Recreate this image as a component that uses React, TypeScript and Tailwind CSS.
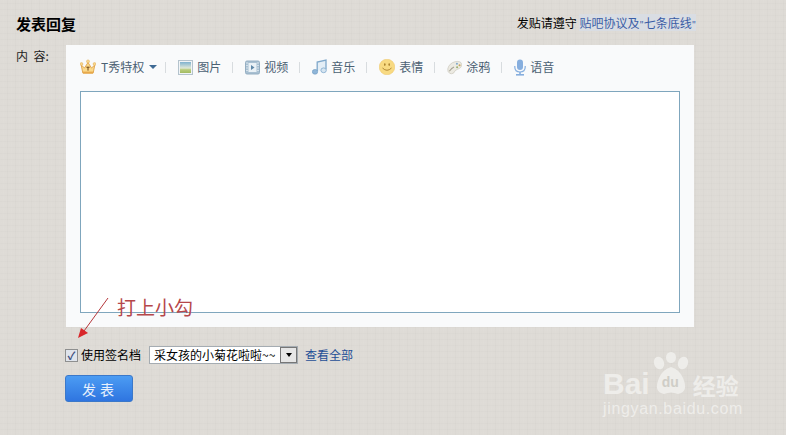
import { ReactNode } from 'react';

const cjk = "font-['Noto_Sans_CJK_SC','Liberation_Sans',sans-serif]";

function Crown() {
  return (
    <svg width="16" height="16" viewBox="0 0 16 16">
      <path d="M1.2 6 L4.5 9 L8 3.5 L11.5 9 L14.8 6 L13.2 14 H2.8 Z" fill="#fbd98a" stroke="#dfa24a" strokeWidth="0.9" />
      <circle cx="1.5" cy="5" r="1.4" fill="#f9d88c" stroke="#e0a850" strokeWidth="0.5" />
      <circle cx="14.5" cy="5" r="1.4" fill="#f9d88c" stroke="#e0a850" strokeWidth="0.5" />
      <circle cx="8" cy="2.4" r="1.5" fill="#f9d88c" stroke="#e0a850" strokeWidth="0.5" />
      <rect x="3" y="12.6" width="10" height="2" fill="#e8a94a" />
      <path d="M6.4 8.2 H9.6 M8 8.2 V11.6" stroke="#6e4210" strokeWidth="1" />
    </svg>
  );
}

function Picture() {
  return (
    <svg width="15" height="15" viewBox="0 0 15 15">
      <defs>
        <linearGradient id="sky" x1="0" y1="0" x2="0" y2="1">
          <stop offset="0" stopColor="#7fb2cf" />
          <stop offset="0.55" stopColor="#dfe8d8" />
          <stop offset="0.7" stopColor="#b9cc7c" />
          <stop offset="1" stopColor="#a2bb62" />
        </linearGradient>
      </defs>
      <rect x="0.5" y="0.5" width="14" height="14" fill="#f1f4f6" stroke="#b4c3cd" />
      <rect x="2" y="2" width="11" height="11" fill="url(#sky)" />
    </svg>
  );
}

function Film() {
  return (
    <svg width="15" height="15" viewBox="0 0 15 15">
      <rect x="0.5" y="1" width="14" height="13" rx="1.5" fill="#a9c0d2" stroke="#94aec2" />
      <path d="M1 3 H3 M1 5.5 H3 M1 8 H3 M1 10.5 H3 M12 3 H14 M12 5.5 H14 M12 8 H14 M12 10.5 H14" stroke="#dfe8ef" strokeWidth="0.8" />
      <rect x="3.5" y="3" width="8" height="9" fill="#eaf1f6" />
      <path d="M6 5 L9.5 7.5 L6 10 Z" fill="#5f88a8" />
    </svg>
  );
}

function Music() {
  return (
    <svg width="15" height="16" viewBox="0 0 15 16">
      <path d="M5.2 12 V3 L14 1 V10.5" fill="#e4eef6" stroke="#7fa8cb" strokeWidth="1.3" />
      <ellipse cx="3" cy="12.8" rx="2.7" ry="2.4" fill="#8fb5d8" stroke="#6f9cc2" strokeWidth="0.6" />
      <ellipse cx="11.6" cy="11.3" rx="2.7" ry="2.4" fill="#d6e5f1" stroke="#7fa8cb" strokeWidth="0.8" />
    </svg>
  );
}

function Smile() {
  return (
    <svg width="16" height="16" viewBox="0 0 16 16">
      <circle cx="8" cy="8" r="7.8" fill="#f8da82" stroke="#ecc56a" strokeWidth="0.5" />
      <ellipse cx="5.8" cy="5.6" rx="0.8" ry="1.3" fill="#a9802c" />
      <ellipse cx="10.2" cy="5.6" rx="0.8" ry="1.3" fill="#a9802c" />
      <path d="M3.5 9 Q8 13.5 12.5 9" fill="none" stroke="#a9802c" strokeWidth="0.9" />
    </svg>
  );
}

function Palette() {
  return (
    <svg width="15" height="15" viewBox="0 0 16 15">
      <path d="M0.8 9 Q2 3 9 1.2 Q15 0.2 15.6 4 Q16 8 11 9.5 Q8 10.5 7.5 13 Q5 15 3 13.8 Q0.3 12 0.8 9 Z" fill="#eceae2" stroke="#c2bfb2" strokeWidth="0.6" />
      <circle cx="10.6" cy="3.4" r="1.1" fill="#7fa8cb" />
      <circle cx="13.4" cy="5" r="1.1" fill="#c7a65a" />
      <circle cx="10.8" cy="7.3" r="1.1" fill="#9ab070" />
      <path d="M2.5 11.5 Q5 8 7.5 7" stroke="#a5a294" strokeWidth="1.1" fill="none" />
    </svg>
  );
}

function Mic() {
  return (
    <svg width="12" height="17" viewBox="0 0 12 17">
      <rect x="3" y="0.5" width="6" height="10.5" rx="3" fill="#86aede" />
      <path d="M0.8 7 V8 Q0.8 13 6 13 Q11.2 13 11.2 8 V7" fill="none" stroke="#86aede" strokeWidth="1.2" />
      <rect x="5.2" y="13" width="1.6" height="2" fill="#86aede" />
      <rect x="2" y="15" width="8" height="1.6" fill="#86aede" />
    </svg>
  );
}

function Tool({ icon, label }: { icon: ReactNode; label: string }) {
  return (
    <div className="flex items-center gap-1">
      {icon}
      <span className="text-[12px] leading-none text-[#4b6173]">{label}</span>
    </div>
  );
}

const Sep = () => <span className="w-px h-[11px] bg-[#d8dcdf] ml-[11px] mr-3" />;

export default function App() {
  return (
    <div className={`${cjk} relative w-[786px] h-[435px] overflow-hidden bg-[#dedbd6] bg-[repeating-linear-gradient(90deg,#0000_0_3px,#ffffff06_3px_4px,#0000_4px_7px,#00000004_7px_8px),repeating-linear-gradient(0deg,#0000_0_2px,#ffffff05_2px_3px,#0000_3px_5px,#00000003_5px_6px)] pl-4 pt-[14px]`}>
      <div className="flex justify-between items-center w-[680px] h-[18px]">
        <h2 className="text-[15px] leading-none font-bold text-black">发表回复</h2>
        <p className="text-[12px] leading-none text-black">
          发贴请遵守 <a className="text-[#3b5ea6] bg-[#d9dde3]">贴吧协议及<span className="text-[9px]">"</span>七条底线<span className="text-[9px]">"</span></a>
        </p>
      </div>

      <div className="flex mt-[13px]">
        <span className="w-[50px] pt-[2px] text-[12px] leading-[18px] text-[#222] whitespace-pre">内  容:</span>
        <div className="w-[628px] h-[282px] bg-[#f9fafb] px-[14px] pt-3 flex flex-col">
          <div className="flex items-center h-[20px]">
            <div className="flex items-center gap-[5px]">
              <Crown />
              <span className="text-[12px] leading-none text-[#4b6173]">T秀特权</span>
              <span className="w-0 h-0 border-x-4 border-x-transparent border-t-4 border-t-[#3f6a94]" />
            </div>
            <span className="w-px h-[11px] bg-[#d8dcdf] ml-2 mr-3" />
            <Tool icon={<Picture />} label="图片" />
            <Sep />
            <Tool icon={<Film />} label="视频" />
            <Sep />
            <Tool icon={<Music />} label="音乐" />
            <Sep />
            <Tool icon={<Smile />} label="表情" />
            <Sep />
            <Tool icon={<Palette />} label="涂鸦" />
            <Sep />
            <Tool icon={<Mic />} label="语音" />
          </div>
          <div className="w-[600px] h-[222px] mt-[14px] bg-white border border-[#7fa6bd]" />
        </div>
      </div>

      <div className="flex items-center ml-[49px] mt-[19px] h-[18px]">
        <span className="flex items-center justify-center w-[13px] h-[13px] bg-[#dfe4ec] border border-[#8e8f8f] text-[11px] leading-none font-bold text-[#3d4f7f]">✓</span>
        <span className="ml-[3px] text-[12px] leading-none text-black">使用签名档</span>
        <div className="flex items-center ml-2 w-[149px] h-[18px] bg-white border border-[#a5acb2]">
          <span className="flex-1 pl-1 text-[12px] leading-[16px] text-black whitespace-nowrap">采女孩的小菊花啦啦~~</span>
          <span className="flex items-center justify-center w-[17px] h-[16px] bg-[#e6e6e6] border border-[#777]">
            <span className="w-0 h-0 border-x-[3px] border-x-transparent border-t-[4px] border-t-black" />
          </span>
        </div>
        <a className="ml-[7px] text-[12px] leading-none text-[#1f4f96]">查看全部</a>
      </div>

      <button className="block ml-[49px] mt-[11px] w-[68px] h-[27px] pl-[2px] rounded-[3px] border border-[#3b78c9] bg-gradient-to-b from-[#4c9cf3] to-[#2f75e0] text-[14px] leading-none tracking-[4px] text-[#e6f0fc]">
        发表
      </button>

      {/* annotation drawn over the form */}
      <svg className="absolute left-[76px] top-[295px]" width="36" height="46" viewBox="0 0 36 46">
        <path d="M32 3 L8 36" stroke="#b5363a" strokeWidth="1" fill="none" />
        <path d="M2 43 L5 33 L12 38 Z" fill="#d8262a" />
      </svg>
      <span className="absolute left-[117px] top-[296px] text-[19px] leading-[22px] text-[#b5474a]">打上小勾</span>

      {/* watermark */}
      <div className="absolute left-[603px] top-[352px] w-[145px] text-[#eeedea]">
        <div className="flex items-end h-[43px]">
          <span className="-mb-[4px] font-['Liberation_Sans',sans-serif] text-[30px] leading-none font-bold">Bai</span>
          <div className="relative w-[42px] h-[43px] shrink-0">
            <svg width="42" height="43" viewBox="0 0 42 43">
              <ellipse cx="9" cy="11" rx="5" ry="6.5" fill="#eeedea" transform="rotate(-20 9 11)" />
              <ellipse cx="21" cy="5.5" rx="5" ry="5.5" fill="#eeedea" />
              <ellipse cx="33" cy="11" rx="5" ry="6.5" fill="#eeedea" transform="rotate(20 33 11)" />
              <path d="M21 15 Q30 18 33 26 Q39 40 28 42 Q21 39 14 42 Q3 40 9 26 Q12 18 21 15 Z" fill="#eeedea" />
            </svg>
            <span className="absolute left-[12px] top-[23px] font-['Liberation_Sans',sans-serif] text-[14px] leading-none font-bold text-[#cfcdc7]">du</span>
          </div>
          <span className="-mb-[2px] ml-[1px] text-[23px] leading-none font-bold whitespace-nowrap">经验</span>
        </div>
        <p className="mt-[6px] font-['Liberation_Sans',sans-serif] text-[16px] leading-none tracking-[0.65px] whitespace-nowrap">jingyan.baidu.com</p>
      </div>
    </div>
  );
}
